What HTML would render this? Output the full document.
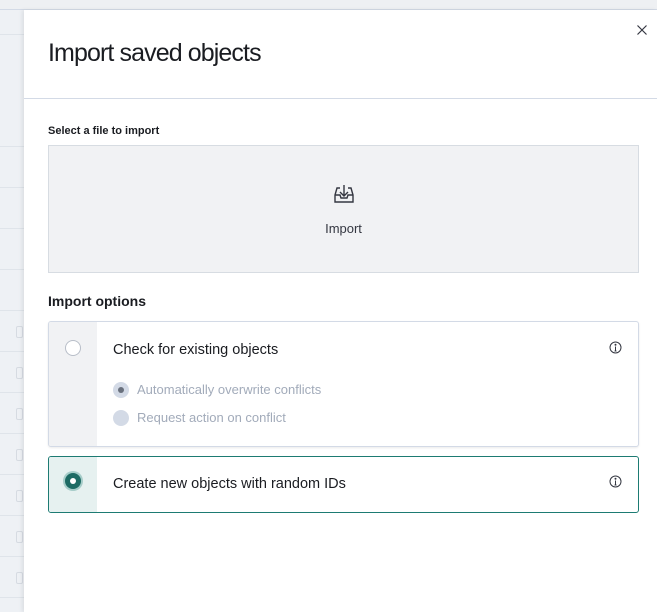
<!DOCTYPE html>
<html><head><style>
*{box-sizing:border-box;margin:0;padding:0}
body{width:657px;height:612px;overflow:hidden;background:#f5f7fa;font-family:"Liberation Sans",sans-serif;color:#343741;position:relative}
.top{position:absolute;left:0;top:0;width:657px;height:10px;background:#eef0f3;border-bottom:1px solid #d3dae6}
.bg{position:absolute;left:0;top:10px;width:24px;height:602px;background:#eef1f5}
.bg .l{position:absolute;left:0;width:24px;height:1px;background:#dfe4ea}
.bg .ic{position:absolute;left:16px;width:7px;height:12px;border:1px solid #d6dbe2;border-radius:2px}
.fly{position:absolute;left:24px;top:10px;width:633px;height:602px;background:#fff;box-shadow:-2px 0 4px rgba(0,0,0,.08)}
h1{position:absolute;left:24px;top:29px;font-size:25px;font-weight:300;letter-spacing:-0.9px;color:#1a1c21}
.hr{position:absolute;left:0;top:88px;width:633px;height:1px;background:#d3dae6}
.x{position:absolute;left:612px;top:14px}
.lbl{position:absolute;left:24px;top:115px;font-size:11px;font-weight:bold;color:#1a1c21}
.fp{position:absolute;left:24px;top:135px;width:591px;height:128px;background:#f1f2f4;border:1px solid #d7dce2}
.fp .t{position:absolute;left:0;width:100%;top:75px;text-align:center;font-size:13px;color:#343741}
.fp svg{position:absolute;left:284px;top:37px}
.io{position:absolute;left:24px;top:283px;font-size:14px;font-weight:bold;color:#1a1c21}
.card{position:absolute;left:24px;width:591px;background:#fff;border:1px solid #d3dae6;border-radius:3px;overflow:hidden}
.card .side{position:absolute;left:0;top:0;bottom:0;width:48px;background:#f1f2f4}
.card .tt{position:absolute;left:64px;font-size:14.5px;color:#1a1c21}
.r{position:absolute;border-radius:50%}
.sub{position:absolute;left:88px;font-size:13px;color:#a2abba}
.info{position:absolute;left:560px}
</style></head><body>
<div class="top"></div>
<div class="bg">
<div class="l" style="top:24px"></div><div class="l" style="top:136px"></div><div class="l" style="top:177px"></div><div class="l" style="top:218px"></div><div class="l" style="top:259px"></div><div class="l" style="top:300px"></div><div class="l" style="top:341px"></div><div class="l" style="top:382px"></div><div class="l" style="top:423px"></div><div class="l" style="top:464px"></div><div class="l" style="top:505px"></div><div class="l" style="top:546px"></div><div class="l" style="top:587px"></div>
<div class="ic" style="top:316px"></div><div class="ic" style="top:357px"></div><div class="ic" style="top:398px"></div><div class="ic" style="top:439px"></div><div class="ic" style="top:480px"></div><div class="ic" style="top:521px"></div><div class="ic" style="top:562px"></div>
</div>
<div class="fly">
<h1>Import saved objects</h1>
<svg class="x" width="12" height="12" viewBox="0 0 12 12"><path d="M1.5 1.5L10.5 10.5M10.5 1.5L1.5 10.5" stroke="#343741" stroke-width="1.2"/></svg>
<div class="hr"></div>
<div class="lbl">Select a file to import</div>
<div class="fp">
<svg width="22" height="22" viewBox="0 0 22 22" fill="none" stroke="#343741" stroke-width="1.4"><path d="M11 2V13M7 9L11 13L15 9"/><path d="M7 5H4L2 12V19H20V12L18 5H15"/><path d="M2 12H7L8 15H14L15 12H20"/></svg>
<div class="t">Import</div>
</div>
<div class="io">Import options</div>
<div class="card" style="top:311px;height:126px;box-shadow:0 1px 2px rgba(0,0,0,.08)">
<div class="side"></div>
<div class="r" style="left:16px;top:18px;width:16px;height:16px;border:1px solid #b8bec8;background:#fff"></div>
<div class="tt" style="top:20px">Check for existing objects</div>
<svg class="info" style="top:19px" width="13" height="13" viewBox="0 0 13 13" fill="none" stroke="#343741"><circle cx="6.5" cy="6.5" r="5.5"/><path d="M6.5 5.5V10M5.5 10H7.5"/><circle cx="6.5" cy="3.7" r=".5" fill="#343741"/></svg>
<div class="r" style="left:64px;top:60px;width:16px;height:16px;background:#d3dae6"><div class="r" style="left:5px;top:5px;width:6px;height:6px;background:#69707d"></div></div>
<div class="sub" style="top:60px">Automatically overwrite conflicts</div>
<div class="r" style="left:64px;top:88px;width:16px;height:16px;background:#d3dae6"></div>
<div class="sub" style="top:88px">Request action on conflict</div>
</div>
<div class="card" style="top:446px;height:57px;border-color:#1d7b73">
<div class="side" style="background:#e6f1f0"></div>
<div class="r" style="left:14px;top:14px;width:20px;height:20px;background:#a6cdc9"><div class="r" style="left:2px;top:2px;width:16px;height:16px;background:#1d6b64"><div class="r" style="left:5px;top:5px;width:6px;height:6px;background:#fff"></div></div></div>
<div class="tt" style="top:19px">Create new objects with random IDs</div>
<svg class="info" style="top:18px" width="13" height="13" viewBox="0 0 13 13" fill="none" stroke="#343741"><circle cx="6.5" cy="6.5" r="5.5"/><path d="M6.5 5.5V10M5.5 10H7.5"/><circle cx="6.5" cy="3.7" r=".5" fill="#343741"/></svg>
</div>
</div>
</body></html>
